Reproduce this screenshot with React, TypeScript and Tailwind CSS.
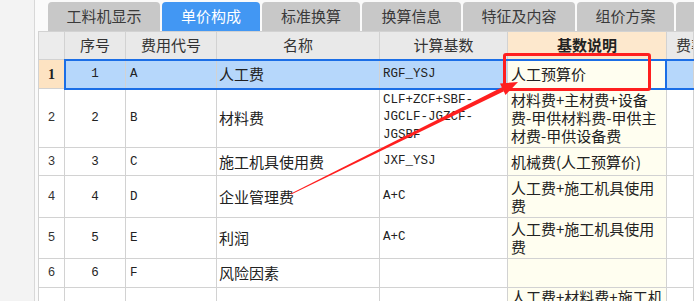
import React from "react";

const CJK = "font-['Noto_Sans_CJK_SC','Noto_Sans',sans-serif]";
const MONO = "font-['Liberation_Mono','Noto_Sans_CJK_SC',monospace]";

const cellBase = "border-r border-b border-[#d2d2d2] shrink-0 flex items-center overflow-hidden";
const C0 = "w-[26px]";
const C1 = "w-[61px]";
const C2 = "w-[91px]";
const C3 = "w-[163px]";
const C4 = "w-[128px]";
const C5 = "w-[159px]";

type Row = {
  h: string;
  no: string;
  seq: string;
  code: string;
  name: string;
  base: React.ReactNode;
  desc: React.ReactNode;
  top?: boolean;
};

const rows: Row[] = [
  { h: "h-[59px]", no: "2", seq: "2", code: "B", name: "材料费", base: <>CLF+ZCF+SBF-<br />JGCLF-JGZCF-<br />JGSBF</>, desc: <>材料费+主材费+设备<br />费-甲供材料费-甲供主<br />材费-甲供设备费</> },
  { h: "h-[28px]", no: "3", seq: "3", code: "C", name: "施工机具使用费", base: "JXF_YSJ", desc: "机械费(人工预算价)" },
  { h: "h-[42px]", no: "4", seq: "4", code: "D", name: "企业管理费", base: "A+C", desc: <>人工费+施工机具使用<br />费</> },
  { h: "h-[41px]", no: "5", seq: "5", code: "E", name: "利润", base: "A+C", desc: <>人工费+施工机具使用<br />费</> },
  { h: "h-[29px]", no: "6", seq: "6", code: "F", name: "风险因素", base: "", desc: "" },
  { h: "h-[60px]", no: "", seq: "", code: "", name: "", base: "", desc: <>人工费+材料费+施工机<br />具使用费</>, top: true },
];

const tabs = [
  { t: "工料机显示", w: "w-[112px]" },
  { t: "单价构成", w: "w-[98px]", active: true },
  { t: "标准换算", w: "w-[98px]" },
  { t: "换算信息", w: "w-[99px]" },
  { t: "特征及内容", w: "w-[112px]" },
  { t: "组价方案", w: "w-[97px]" },
  { t: "", w: "w-[40px]" },
];

export default function App() {
  return (
    <div className={`relative w-[694px] h-[301px] overflow-hidden flex bg-white ${CJK}`}>
      <div className="w-[35px] shrink-0 bg-[#f3f3f3] border-r border-[#d8d8d8]" />
      <div className="flex-1 flex flex-col bg-[#fafafa] pl-[3px] min-w-0">
        {/* tabs */}
        <div className="h-[31px] shrink-0 flex items-end gap-[2px] pl-[10px]">
          {tabs.map((tb, i) => (
            <div
              key={i}
              className={`${tb.w} h-[29px] shrink-0 rounded-t-[4px] flex items-center justify-center text-[15px] ${
                tb.active ? "bg-[#4297f3] text-white" : "bg-[#c8c8c8] text-[#3a3a3a]"
              }`}
            >
              {tb.t}
            </div>
          ))}
        </div>
        {/* table */}
        <div className="flex-1 flex flex-col border-l border-[#d2d2d2] bg-white min-w-0">
          {/* header */}
          <div className="flex h-[29px] shrink-0 border-t border-[#d2d2d2] text-[15px] text-[#333]">
            <div className={`${C0} ${cellBase} bg-[#ececec]`} />
            <div className={`${C1} ${cellBase} bg-[#e9e9e9] justify-center`}>序号</div>
            <div className={`${C2} ${cellBase} bg-[#e9e9e9] justify-center`}>费用代号</div>
            <div className={`${C3} ${cellBase} bg-[#e9e9e9] justify-center`}>名称</div>
            <div className={`${C4} ${cellBase} bg-[#e9e9e9] justify-center`}>计算基数</div>
            <div className={`${C5} ${cellBase} bg-[#fde8cd] justify-center font-bold text-[#222]`}>基数说明</div>
            <div className={`${cellBase} flex-1 bg-[#e9e9e9] pl-[9px] whitespace-nowrap`}>费率</div>
          </div>
          {/* row 1 selected */}
          <div className="flex h-[29px] shrink-0 text-[15px] text-[#222]">
            <div className={`${C0} ${cellBase} bg-[#fde3c2] justify-center font-bold font-['Liberation_Serif',serif] text-[14px]`}>1</div>
            <div className={`${C1} ${cellBase} bg-[#b6d7fb] justify-center ${MONO} text-[12.5px]`}>1</div>
            <div className={`${C2} ${cellBase} bg-[#b6d7fb] pl-[4px] ${MONO} text-[12.5px]`}>A</div>
            <div className={`${C3} ${cellBase} bg-[#b6d7fb] pl-[2px]`}>人工费</div>
            <div className={`${C4} ${cellBase} bg-[#b6d7fb] pl-[3px] ${MONO} text-[12.5px]`}>RGF_YSJ</div>
            <div className={`${C5} ${cellBase} bg-[#fffef0] pl-[3px] border-r-2 border-r-[#1b6ee6]`}>人工预算价</div>
            <div className={`${cellBase} flex-1 bg-[#b6d7fb]`} />
          </div>
          {rows.map((r, i) => (
            <div key={i} className={`${r.h} flex shrink-0 text-[15px] text-[#222] leading-[18px]`}>
              <div className={`${C0} ${cellBase} bg-white justify-center ${MONO} text-[12.5px] text-[#333]`}>{r.no}</div>
              <div className={`${C1} ${cellBase} bg-white justify-center ${MONO} text-[12.5px]`}>{r.seq}</div>
              <div className={`${C2} ${cellBase} bg-white pl-[4px] ${MONO} text-[12.5px]`}>{r.code}</div>
              <div className={`${C3} ${cellBase} bg-white pl-[2px]`}>{r.name}</div>
              <div className={`${C4} ${cellBase} bg-white pl-[3px] ${MONO} text-[12.5px] leading-[17.5px]`}>
                <div>{r.base}</div>
              </div>
              <div className={`${C5} ${cellBase} bg-[#fffef0] pl-[3px] ${r.top ? "items-start" : ""}`}>
                <div className="whitespace-nowrap">{r.desc}</div>
              </div>
              <div className={`${cellBase} flex-1 bg-white`} />
            </div>
          ))}
        </div>
      </div>

      {/* selection outline */}
      <div className="absolute left-[64px] top-[59px] w-[640px] h-[31px] border-2 border-[#1b6ee6] pointer-events-none" />
      {/* red annotation box */}
      <div className="absolute left-[503px] top-[53px] w-[148px] h-[38px] border-[3px] border-[#ff1f1f] rounded-[3px] pointer-events-none" />
      {/* red arrow */}
      <svg className="absolute left-0 top-0 pointer-events-none" width="694" height="301" viewBox="0 0 694 301">
        <polygon points="291,194.5 291,193.5 502,87.3 504,91.3" fill="#ff1f1f" />
        <polygon points="518,82 500,83.5 505.5,95" fill="#ff1f1f" />
      </svg>
    </div>
  );
}
